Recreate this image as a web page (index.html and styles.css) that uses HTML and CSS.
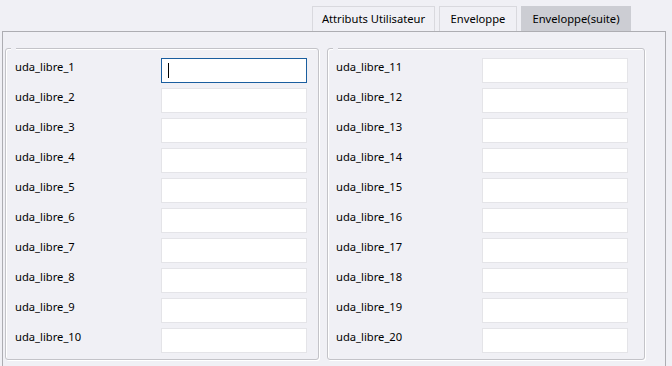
FILE: index.html
```html
<!DOCTYPE html>
<html lang="fr">
<head>
  <meta charset="UTF-8" />
  <title>Enveloppe(suite)</title>
  <link rel="stylesheet" href="styles.css">
</head>
<body>
  <div class="tabs">
    <div class="tab">Attributs Utilisateur</div>
    <div class="tab">Enveloppe</div>
    <div class="tab active">Enveloppe(suite)</div>
  </div>

  <div class="page">
    <div class="group left">
      <div class="row"><span class="label">uda_libre_1</span><div class="field focus"><span class="caret"></span></div></div>
      <div class="row"><span class="label">uda_libre_2</span><div class="field"></div></div>
      <div class="row"><span class="label">uda_libre_3</span><div class="field"></div></div>
      <div class="row"><span class="label">uda_libre_4</span><div class="field"></div></div>
      <div class="row"><span class="label">uda_libre_5</span><div class="field"></div></div>
      <div class="row"><span class="label">uda_libre_6</span><div class="field"></div></div>
      <div class="row"><span class="label">uda_libre_7</span><div class="field"></div></div>
      <div class="row"><span class="label">uda_libre_8</span><div class="field"></div></div>
      <div class="row"><span class="label">uda_libre_9</span><div class="field"></div></div>
      <div class="row"><span class="label">uda_libre_10</span><div class="field"></div></div>
    </div>
    <div class="group right">
      <div class="row"><span class="label">uda_libre_11</span><div class="field"></div></div>
      <div class="row"><span class="label">uda_libre_12</span><div class="field"></div></div>
      <div class="row"><span class="label">uda_libre_13</span><div class="field"></div></div>
      <div class="row"><span class="label">uda_libre_14</span><div class="field"></div></div>
      <div class="row"><span class="label">uda_libre_15</span><div class="field"></div></div>
      <div class="row"><span class="label">uda_libre_16</span><div class="field"></div></div>
      <div class="row"><span class="label">uda_libre_17</span><div class="field"></div></div>
      <div class="row"><span class="label">uda_libre_18</span><div class="field"></div></div>
      <div class="row"><span class="label">uda_libre_19</span><div class="field"></div></div>
      <div class="row"><span class="label">uda_libre_20</span><div class="field"></div></div>
    </div>
  </div>
</body>
</html>
```

FILE: styles.css
```css
body {
  margin: 0;
  background: #f0f0f5;
  font-family: 'Noto Sans', 'Open Sans', sans-serif;
  font-size: 11.2px;
  color: #000;
  overflow: hidden;
}

/* === TABS === */
.tabs {
  display: flex;
  padding: 6px 0 0 312px;
  height: 25px;
}

.tab {
  height: 24px;
  line-height: 23px;
  border: 1px solid #d9d9de;
  border-bottom: none;
  margin-right: 4px;
  text-align: center;
  white-space: nowrap;
}

.tab:nth-child(1) {
  width: 121px;
}

.tab:nth-child(2) {
  width: 76px;
}

.tab.active {
  background: #cccdd3;
  border-color: #cccdd3;
  width: 108px;
}

/* === TAB PAGE === */
.page {
  display: flex;
  gap: 8px;
  margin-left: 2px;
  width: 664px;
  height: 340px;
  padding: 16px 0 0 2px;
  box-sizing: border-box;
  border: 1px solid #adadb2;
  border-bottom: none;
}

/* === GROUP BOXES === */
.group {
  position: relative;
  display: flex;
  flex-direction: column;
  gap: 5px;
  height: 312px;
  box-sizing: border-box;
  padding-top: 9px;
  border: 1px solid #c3c3c8;
  border-radius: 3px;
  box-shadow: inset 1px 1px 0 #fff, 1px 1px 0 #fff;
}

.group::before {
  content: '';
  position: absolute;
  top: -1px;
  left: 5px;
  width: 5px;
  height: 2px;
  background: #f0f0f5;
}

.group.left {
  width: 314px;
  padding-left: 9px;
}

.group.right {
  width: 318px;
  padding-left: 8px;
}

.row {
  display: flex;
  align-items: center;
  height: 25px;
}

.label {
  width: 146px;
  margin-top: -8px;
}

.field {
  width: 146px;
  height: 25px;
  box-sizing: border-box;
  background: #fff;
  border: 1px solid #e4e4e8;
  position: relative;
}

.field.focus {
  border-color: #1a5e9f;
}

.caret {
  position: absolute;
  left: 6px;
  top: 4px;
  width: 1px;
  height: 15px;
  background: #000;
}
```
